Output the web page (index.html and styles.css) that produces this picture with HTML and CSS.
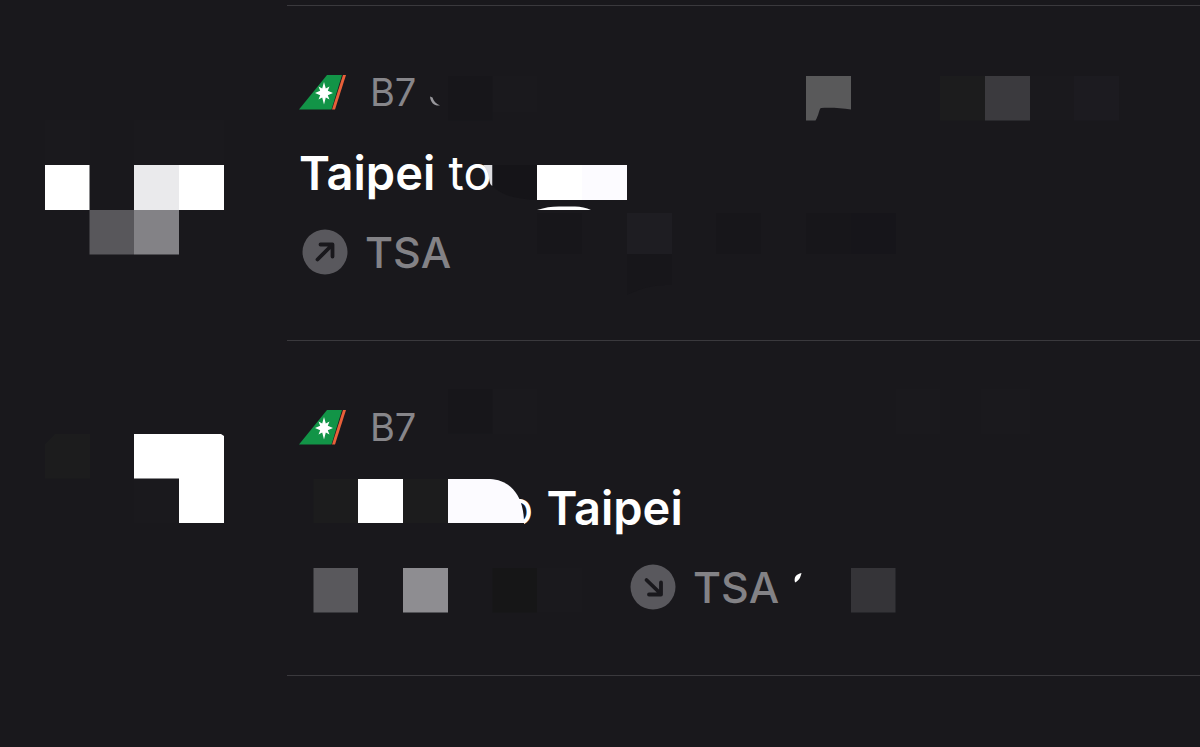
FILE: index.html
```html
<!DOCTYPE html>
<html lang="en">
<head>
    <meta charset="UTF-8">
    <meta name="viewport" content="width=device-width, initial-scale=1.0">
    <title>Flights</title>
    <link rel="stylesheet" href="styles.css">
</head>
<body>
    <!-- Shared icons -->
    <svg class="sprite" aria-hidden="true">
        <symbol id="tail" viewBox="0 0 50 48">
            <path fill="#129447" d="M0 41.500 28 7h15L32.500 41.500z"/>
            <path fill="#e8603a" d="M44 7h3L36 41.500h-3z"/>
            <path fill="#fff" d="M25 14l1.800 6.600 3.700-2-1.700 4.200 5.200 2.200-5.200 2.200 1.700 4.200-3.700-2L25 36.500l-1.800-7.100-3.700 2 1.700-4.200L16 25l5.200-2.200-1.700-4.200 3.700 2z"/>
        </symbol>
        <symbol id="depart" viewBox="0 0 50 48">
            <circle cx="26" cy="24" r="22.500" fill="#59585d"/>
            <path d="M18.500 31.500 33 17M21.500 16.500h12v12" fill="none" stroke="#19181c" stroke-width="3.800" stroke-linecap="round" stroke-linejoin="round"/>
        </symbol>
        <symbol id="arrive" viewBox="0 0 50 48">
            <circle cx="26" cy="24" r="22.500" fill="#59585d"/>
            <path d="M19.500 17 34 31M34 19.500v12H22" fill="none" stroke="#19181c" stroke-width="3.800" stroke-linecap="round" stroke-linejoin="round"/>
        </symbol>
    </svg>

    <ul class="flights">
        <li class="flight">
            <div class="details">
                <div class="line airline">
                    <svg class="icon"><use href="#tail"/></svg>
                    <span>B7</span>
                </div>
                <h2 class="line route"><strong>Taipei</strong> to</h2>
                <div class="line airport">
                    <svg class="icon"><use href="#depart"/></svg>
                    <span>TSA</span>
                </div>
            </div>
            <!-- Hidden flight data -->
            <svg class="mosaic" viewBox="0 5 1200 335" aria-hidden="true">
                <path fill="#1a191d" d="M45 120h45v45H45zM134 120h90v45h-90z"/>
                <path fill="#fff" d="M45 165h44.500v45H45zM179 165h45v45h-45z"/>
                <path fill="#eaeaec" d="M134 165h45v45h-45z"/>
                <path fill="#58575b" d="M89.500 210H134v44.500H89.500z"/>
                <path fill="#838286" d="M134 210h45v44.500h-45z"/>
                <path fill="#98979c" d="M430 96.500c.5 6 4 9.500 10 9-4-1.500-6.500-4.500-7.500-8z"/>
                <path fill="#17161a" d="M448 76h44.500v44.500H448z"/>
                <path fill="#1a191d" d="M492.500 76H537v36h-44.500z"/>
                <path fill="#59595a" d="M806 76h45v33.500c-10-1.500-20-2-30-1.500-2 1-2 7-5.500 12.500H806z"/>
                <path fill="#1c1c1d" d="M940 76h45v44.500h-45z"/>
                <path fill="#3b3a3e" d="M985 76h45v44.500h-45z"/>
                <path fill="#1a191d" d="M1030 76h44v44.500h-44z"/>
                <path fill="#1c1b20" d="M1074 76h45v44.500h-45z"/>
                <path fill="#dcdce0" d="M483 165h9.500v21c-2.500-1-3-4-3.500-8-1-6-3-10-6-13z"/>
                <path fill="#151418" d="M492.500 165H537v35c-20-1-35-4-44.500-14z"/>
                <path fill="#fff" d="M537 165h45v35h-45z"/>
                <path fill="#fcfbff" d="M582 165h45v35h-45z"/>
                <path fill="#fff" d="M537 210c8-2.500 14-3.500 22-3.500h16c6 0 11 1.500 16 3.500z"/>
                <path fill="#17161a" d="M537 213h45v41h-45zM627 254h45v31c-17 0-28 2-45 10zM716 213h45v41h-45z"/>
                <path fill="#1e1d22" d="M627 213h45v41h-45z"/>
                <path fill="#17161a" d="M806 213h45v41h-45z"/>
                <path fill="#16151a" d="M851 213h45v41h-45z"/>
            </svg>
        </li>

        <li class="flight">
            <div class="details">
                <div class="line airline">
                    <svg class="icon"><use href="#tail"/></svg>
                    <span>B7</span>
                </div>
                <h2 class="line route"><span class="hidden-city"></span>o <strong>Taipei</strong></h2>
                <div class="line airport">
                    <span class="hidden-airport"></span>
                    <svg class="icon"><use href="#arrive"/></svg>
                    <span>TSA</span>
                </div>
            </div>
            <svg class="mosaic" viewBox="0 340 1200 335" aria-hidden="true">
                <path fill="#1c1c1d" d="M45 444l10-10h35v44.500H45zM313.500 479H358v44h-44.500zM403 479h45v44h-45z"/>
                <path fill="#fff" d="M134 434h87l3 2v87h-45v-44.500h-45z"/>
                <path fill="#1a191d" d="M134 479h45v44h-45z"/>
                <path fill="#17161a" d="M448 389h44.500v44.500H448z"/>
                <path fill="#1a191d" d="M492.500 389H537v45h-44.500zM896 389h44v45h-44zM981 389h49v45h-49z"/>
                <path fill="#fff" d="M358 479h45v44h-45z"/>
                <path fill="#19181c" d="M448 523h76v6h-76z"/>
                <path fill="#fcfbff" d="M448 479h42c22 1 34 19 34 44h-76z"/>
                <path fill="#59585c" d="M313.500 568H358v44.500h-44.500z"/>
                <path fill="#8e8d91" d="M403 568h45v44.500h-45z"/>
                <path fill="#161617" d="M492.500 568H537v44.500h-44.500z"/>
                <path fill="#1a191d" d="M537 568h45v44.500h-45z"/>
                <path fill="#fff" d="M801.500 573c-5 1-8 4-6.500 9.500 4-2 5.500-5 6.500-9.500z"/>
                <path fill="#353438" d="M851 568h44.500v44.500H851z"/>
            </svg>
        </li>
    </ul>
</body>
</html>
```

FILE: styles.css
```css
body {
    font-family: Inter, 'Liberation Sans', sans-serif;
    background: #19181c;
    color: #fff;
    margin: 0;
    min-height: 100vh;
    overflow-x: hidden;
}

.sprite {
    display: none;
}

.flights {
    list-style: none;
    margin: 0;
    padding: 5px 0 0;
}

.flight {
    position: relative;
    padding-left: 287px;
}

.details {
    display: flex;
    flex-direction: column;
    gap: 32px;
    border-top: 1px solid #3a393d;
    padding: 62px 0 64px 12px;
}

.flight:last-child .details {
    border-bottom: 1px solid #3a393d;
}

.line {
    display: flex;
    align-items: center;
    height: 48px;
    margin: 0;
    white-space: pre;
}

.icon {
    width: 50px;
    height: 48px;
    flex: none;
}

.airline {
    font-size: 38px;
    font-weight: 400;
    color: #87868a;
    gap: 21px;
}

.route {
    font-size: 47px;
    font-weight: 400;
}

.route strong {
    font-weight: 600;
}

.airport {
    font-size: 43px;
    font-weight: 500;
    color: #838286;
    gap: 16px;
}

/* Room taken by the hidden names */
.hidden-city {
    width: 206px;
}

.hidden-airport {
    width: 312px;
}

/* Blocks that cover the private parts of a row */
.mosaic {
    position: absolute;
    top: 0;
    left: 0;
    width: 1200px;
    height: 335px;
    overflow: visible;
    pointer-events: none;
}
```
